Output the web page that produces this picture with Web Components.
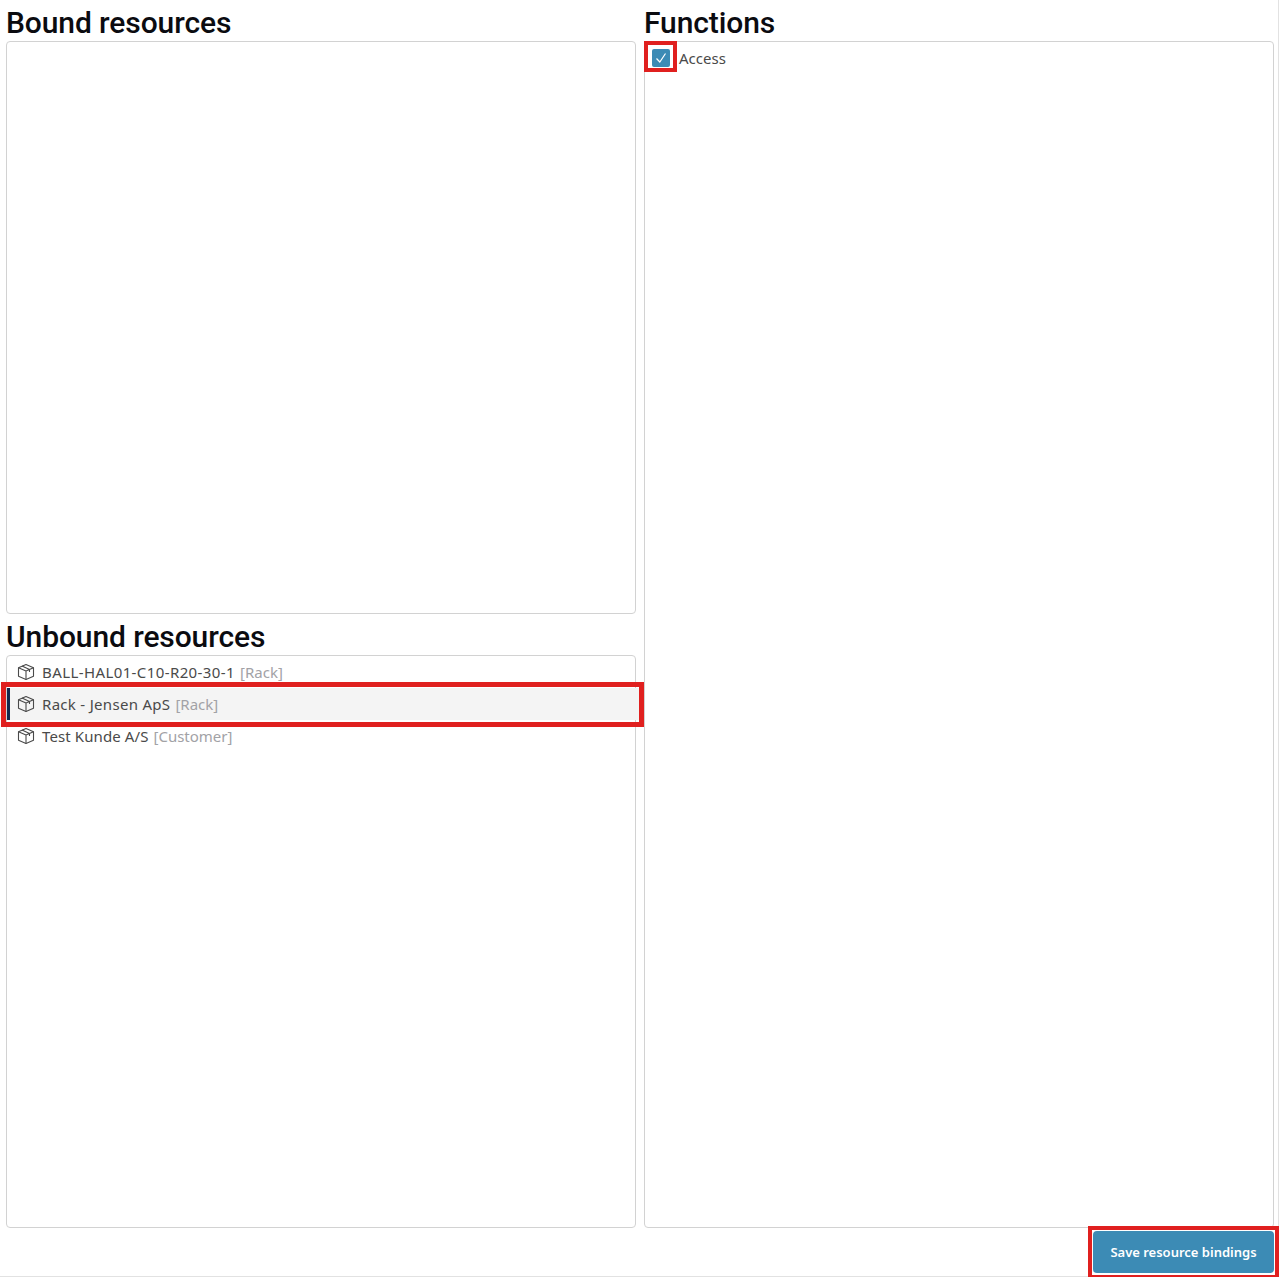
<!DOCTYPE html>
<html>
<head>
<meta charset="utf-8">
<title>Resource bindings</title>
<style>
  html, body { margin: 0; background: #fff; }
  body { font-family: "Noto Sans", "Open Sans", sans-serif; color: #444; }
</style>
</head>
<body>
<template id="panel-tpl">
  <style>
    :host { display: flex; flex-direction: column; min-height: 0; }
    h2 {
      margin: 0;
      height: 35px;
      flex: none;
      font: 500 30px/33px Roboto, sans-serif;
      letter-spacing: -0.1px;
      color: #0b0b10;
    }
    .box {
      flex: 1;
      border: 1px solid #d2d2d2;
      border-radius: 4px;
      box-sizing: border-box;
      min-height: 0;
    }
  </style>
  <h2></h2>
  <div class="box"><slot></slot></div>
</template>

<template id="item-tpl">
  <style>
    :host {
      display: flex;
      align-items: center;
      position: relative;
      height: 32px;
      padding-left: 10px;
      font-size: 15px;
      color: #4a4a4a;
    }
    :host([selected]) {
      background: #f4f4f4;
      box-shadow: inset 3px 0 0 #12294f;
      margin-right: -4px;
    }
    :host([selected])::after {
      content: "";
      position: absolute;
      left: -6px;
      right: -5px;
      top: -6px;
      bottom: -7px;
      border: 5px solid #e0201f;
      box-sizing: border-box;
    }
    svg { width: 18px; height: 18px; margin-right: 7px; flex: none; }
    .name { letter-spacing: var(--name-track, 0); }
    .kind { color: #a2a2a6; margin-left: 5px; }
  </style>
  <svg viewBox="0 0 18 18" fill="none" stroke="#4a4a4a" stroke-width="1.1" stroke-linejoin="round">
    <path d="M9 1.5 16.5 4.7V13.3L9 16.5 1.5 13.3V4.7Z"/>
    <path d="M1.5 4.7 9 8 16.5 4.7M9 8V16.5M5 3 12.5 6.4V9"/>
  </svg>
  <span class="name"><slot></slot></span>
  <span class="kind"></span>
</template>

<template id="check-tpl">
  <style>
    :host {
      display: flex;
      align-items: center;
      position: relative;
      height: 32px;
      padding-left: 7px;
      font-size: 15px;
      color: #4a4a4a;
    }
    .tick {
      position: relative;
      width: 18px;
      height: 18px;
      margin-right: 9px;
      background: #3c8bb5;
      border-radius: 2px;
    }
    .tick::after {
      content: "";
      position: absolute;
      left: -8px;
      top: -8px;
      width: 33px;
      height: 31px;
      border: 4px solid #e0201f;
      box-sizing: border-box;
    }
    svg { display: block; width: 18px; height: 18px; }
  </style>
  <span class="tick">
    <svg viewBox="0 0 18 18" fill="none" stroke="#fff" stroke-width="1.2"><path d="M4.5 9.5 7.8 13 13.5 4.5"/></svg>
  </span>
  <span><slot></slot></span>
</template>

<template id="save-tpl">
  <style>
    :host { display: block; position: relative; }
    button {
      display: block;
      width: 181px;
      height: 42px;
      padding: 0;
      border: 0;
      border-radius: 4px;
      background: #3c8bb5;
      color: #fff;
      font: 600 13px "Noto Sans", "Open Sans", sans-serif;
    }
    :host::after {
      content: "";
      position: absolute;
      left: -5px;
      right: -5px;
      top: -5px;
      bottom: -6px;
      border: 4px solid #e0201f;
      box-sizing: border-box;
    }
  </style>
  <button><slot></slot></button>
</template>

<template id="page-tpl">
  <style>
    :host {
      display: grid;
      box-sizing: border-box;
      width: 1279px;
      height: 1277px;
      padding: 6px 4px 3px 6px;
      grid-template-columns: 630px 630px;
      grid-template-rows: 608px 614px 1fr;
      column-gap: 8px;
      border-right: 1px solid #e2e2e2;
      border-bottom: 1px solid #e2e2e2;
    }
    ::slotted(:nth-child(2)) { margin-top: 6px; }
    ::slotted([slot="right"]) { grid-column: 2; grid-row: 1 / 3; }
    ::slotted([slot="save"]) { grid-column: 2; grid-row: 3; justify-self: end; align-self: end; }
  </style>
  <slot></slot>
  <slot name="right"></slot>
  <slot name="save"></slot>
</template>

<binding-page>
  <binding-panel heading="Bound resources"></binding-panel>
  <binding-panel heading="Unbound resources">
    <resource-item kind="[Rack]" style="--name-track: .4px">BALL-HAL01-C10-R20-30-1</resource-item>
    <resource-item kind="[Rack]" style="--name-track: .3px" selected>Rack - Jensen ApS</resource-item>
    <resource-item kind="[Customer]" style="--name-track: .1px">Test Kunde A/S</resource-item>
  </binding-panel>
  <binding-panel slot="right" heading="Functions">
    <function-check>Access</function-check>
  </binding-panel>
  <save-button slot="save">Save resource bindings</save-button>
</binding-page>

<script>
  function shadowFrom(el, id) {
    el.attachShadow({ mode: 'open' });
    el.shadowRoot.appendChild(document.getElementById(id).content.cloneNode(true));
  }

  class BindingPage extends HTMLElement {
    constructor() { super(); shadowFrom(this, 'page-tpl'); }
  }

  class BindingPanel extends HTMLElement {
    constructor() { super(); shadowFrom(this, 'panel-tpl'); }
    connectedCallback() {
      this.shadowRoot.querySelector('h2').textContent = this.getAttribute('heading');
    }
  }

  class ResourceItem extends HTMLElement {
    constructor() { super(); shadowFrom(this, 'item-tpl'); }
    connectedCallback() {
      this.shadowRoot.querySelector('.kind').textContent = this.getAttribute('kind');
    }
  }

  class FunctionCheck extends HTMLElement {
    constructor() { super(); shadowFrom(this, 'check-tpl'); }
  }

  class SaveButton extends HTMLElement {
    constructor() { super(); shadowFrom(this, 'save-tpl'); }
  }

  customElements.define('binding-page', BindingPage);
  customElements.define('binding-panel', BindingPanel);
  customElements.define('resource-item', ResourceItem);
  customElements.define('function-check', FunctionCheck);
  customElements.define('save-button', SaveButton);
</script>
</body>
</html>
